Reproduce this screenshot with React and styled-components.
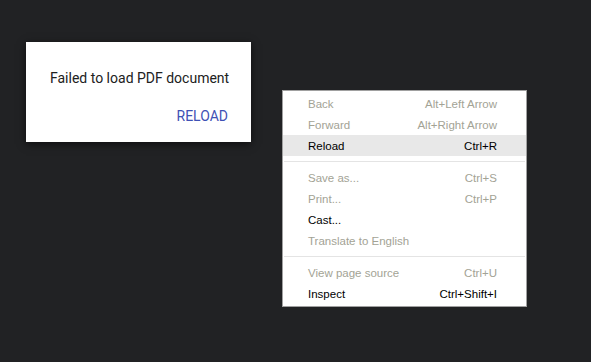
import styled, { createGlobalStyle } from "styled-components";

const GlobalStyle = createGlobalStyle`
  html, body {
    margin: 0;
    padding: 0;
    background: #212224;
    height: 100%;
  }
`;

const Page = styled.div`
  display: flex;
  align-items: flex-start;
  width: 591px;
  height: 362px;
  padding: 42px 0 0 26px;
  box-sizing: border-box;
  background: #212224;
`;

const ErrorDialog = styled.div`
  width: 225px;
  height: 100px;
  box-sizing: border-box;
  padding: 28px 23px 0 24px;
  background: #fff;
  box-shadow: 0 2px 8px rgba(0, 0, 0, 0.6);
  font-family: Roboto, "Liberation Sans", sans-serif;
  font-size: 14px;
  line-height: 16px;
`;

const Message = styled.div`
  color: #212121;
  white-space: nowrap;
`;

const ReloadButton = styled.div`
  margin-top: 22px;
  text-align: right;
  color: #3f51b5;
`;

const Menu = styled.div`
  margin: 48px 0 0 31px;
  width: 245px;
  box-sizing: border-box;
  padding: 2px 0;
  border: 1px solid #a0a0a0;
  background: #fff;
  font-family: "Liberation Sans", Arial, sans-serif;
  font-size: 11.5px;
`;

const Item = styled.div`
  display: flex;
  justify-content: space-between;
  align-items: center;
  height: 21px;
  padding: 0 29px 0 25px;
  color: ${(p) => (p.disabled ? "#a3a395" : "#000")};
  background: ${(p) => (p.active ? "#e8e8e8" : "transparent")};
`;

const Separator = styled.div`
  height: 1px;
  margin: 5px 1px;
  background: #e4e4e4;
`;

const items = [
  [
    { label: "Back", key: "Alt+Left Arrow", disabled: true },
    { label: "Forward", key: "Alt+Right Arrow", disabled: true },
    { label: "Reload", key: "Ctrl+R", active: true },
  ],
  [
    { label: "Save as...", key: "Ctrl+S", disabled: true },
    { label: "Print...", key: "Ctrl+P", disabled: true },
    { label: "Cast..." },
    { label: "Translate to English", disabled: true },
  ],
  [
    { label: "View page source", key: "Ctrl+U", disabled: true },
    { label: "Inspect", key: "Ctrl+Shift+I" },
  ],
];

const App = () => {
  return (
    <Page>
      <GlobalStyle />
      <ErrorDialog>
        <Message>Failed to load PDF document</Message>
        <ReloadButton>RELOAD</ReloadButton>
      </ErrorDialog>
      <Menu>
        {items.map((group, i) => (
          <div key={i}>
            {i > 0 && <Separator />}
            {group.map((it) => (
              <Item key={it.label} disabled={it.disabled} active={it.active}>
                <span>{it.label}</span>
                <span>{it.key}</span>
              </Item>
            ))}
          </div>
        ))}
      </Menu>
    </Page>
  );
};

export default App;
